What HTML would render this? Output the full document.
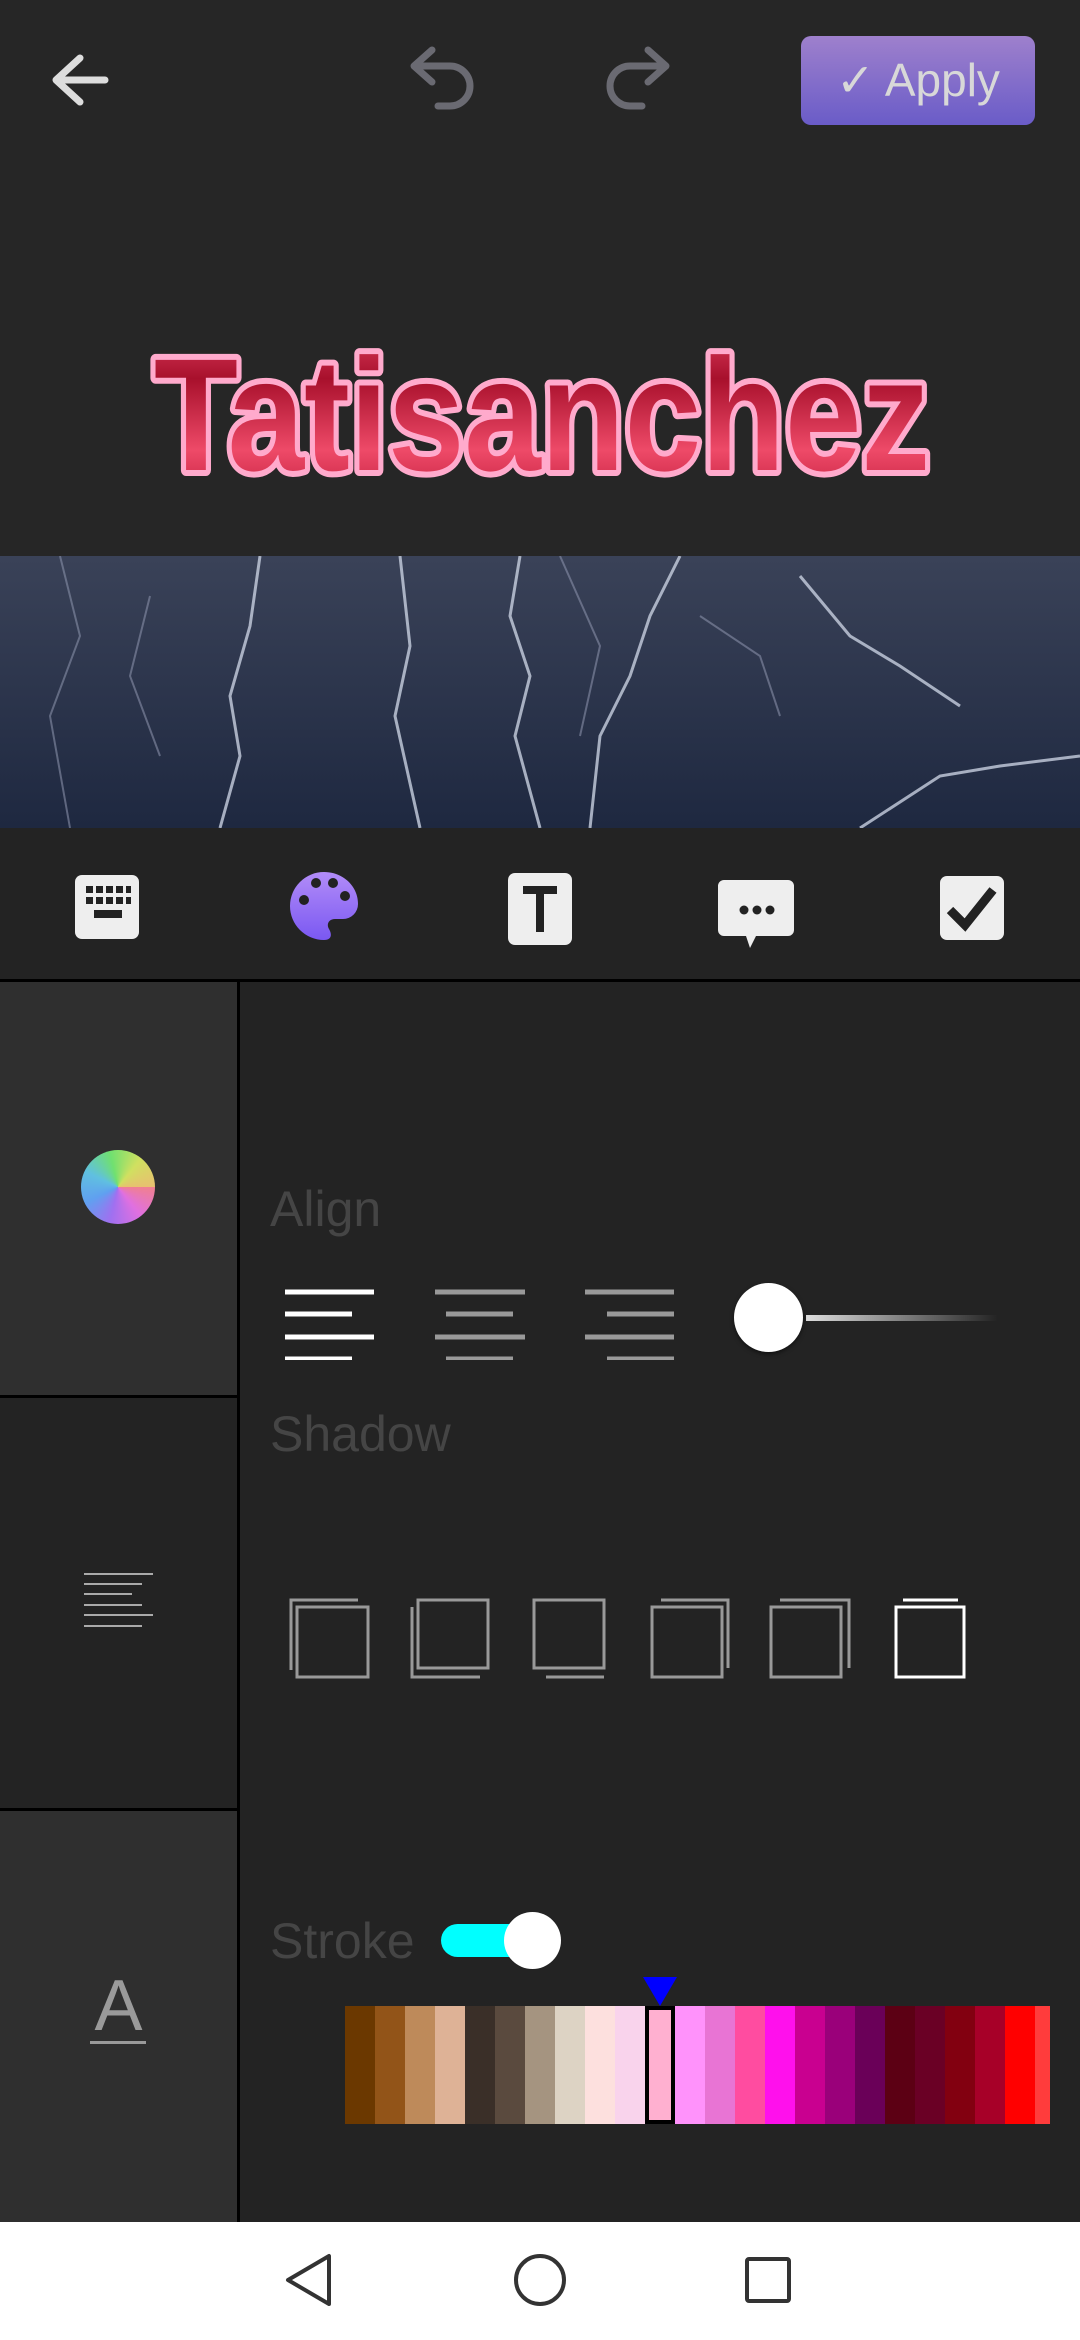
<!DOCTYPE html>
<html><head><meta charset="utf-8"><style>
*{margin:0;padding:0;box-sizing:border-box}
body{width:1080px;height:2340px;background:#262626;position:relative;overflow:hidden;font-family:"Liberation Sans",sans-serif}
.abs{position:absolute}
.lbl{position:absolute;color:#454545;font-size:50px;font-family:"Liberation Sans",sans-serif}
</style></head><body>
<!-- top bar -->
<svg class="abs" style="left:0;top:0" width="1080" height="140">
<path d="M105 80 H58 M80 58 L56 80 L80 102" stroke="#ddd" stroke-width="7" fill="none" stroke-linecap="round" stroke-linejoin="round"/>
<path d="M432 58 L414 74 L432 90 M416 74 H450 a20 20 0 0 1 0 40 H438" stroke="#6a6a72" stroke-width="7" fill="none" stroke-linecap="round" stroke-linejoin="round" transform="translate(0,-8)"/>
<path d="M648 58 L666 74 L648 90 M664 74 H630 a20 20 0 0 0 0 40 H642" stroke="#6a6a72" stroke-width="7" fill="none" stroke-linecap="round" stroke-linejoin="round" transform="translate(0,-8)"/>
</svg>
<div class="abs" style="left:801px;top:36px;width:234px;height:89px;border-radius:10px;background:linear-gradient(#9e80cc,#6a5cc8);color:#d8d8d8;font-size:46px;line-height:89px;text-align:center">✓ Apply</div>
<!-- title text -->
<svg class="abs" style="left:0;top:320px" width="1080" height="200">
<defs><linearGradient id="g" x1="0" y1="0" x2="0" y2="1"><stop offset="0" stop-color="#e04060"/><stop offset=".3" stop-color="#a8102c"/><stop offset=".7" stop-color="#ee4a68"/><stop offset="1" stop-color="#c01c3c"/></linearGradient></defs>
<text x="154" y="150" font-family="Liberation Sans" font-weight="bold" font-size="160" textLength="776" lengthAdjust="spacingAndGlyphs" fill="url(#g)" stroke="#ffaacc" stroke-width="12" stroke-linejoin="round" paint-order="stroke">Tatisanchez</text>
</svg>
<!-- lightning band -->
<svg class="abs" style="left:0;top:556px" width="1080" height="272">
<defs><linearGradient id="sky" x1="0" y1="0" x2="0" y2="1"><stop offset="0" stop-color="#3a4258"/><stop offset="1" stop-color="#1e2840"/></linearGradient></defs>
<rect width="1080" height="272" fill="url(#sky)"/>
<g stroke="#c8d0e0" stroke-width="3" fill="none" opacity=".8">
<path d="M520 0 L510 60 L530 120 L515 180 L540 272"/>
<path d="M680 0 L650 60 L630 120 L600 180 L590 272"/>
<path d="M260 0 L250 70 L230 140 L240 200 L220 272"/>
<path d="M800 20 L850 80 L900 110 L960 150"/>
<path d="M860 272 L940 220 L1000 210 L1080 200"/>
<path d="M400 0 L410 90 L395 160 L420 272"/>
</g>
<g stroke="#8890a8" stroke-width="2" fill="none" opacity=".6">
<path d="M60 0 L80 80 L50 160 L70 272"/><path d="M150 40 L130 120 L160 200"/><path d="M700 60 L760 100 L780 160"/><path d="M560 0 L600 90 L580 180"/>
</g>
</svg>
<!-- toolbar -->
<div class="abs" style="left:0;top:828px;width:1080px;height:152px;background:#232323"></div>
<svg class="abs" style="left:0;top:828px" width="1080" height="152">
<rect x="75" y="47" width="64" height="64" rx="7" fill="#eee"/>
<g fill="#222"><rect x="86" y="58" width="7" height="7"/><rect x="96" y="58" width="7" height="7"/><rect x="106" y="58" width="7" height="7"/><rect x="116" y="58" width="7" height="7"/><rect x="126" y="58" width="5" height="7"/><rect x="86" y="69" width="7" height="7"/><rect x="96" y="69" width="7" height="7"/><rect x="106" y="69" width="7" height="7"/><rect x="116" y="69" width="7" height="7"/><rect x="126" y="69" width="5" height="7"/><rect x="94" y="82" width="28" height="8"/></g>
<defs><linearGradient id="pal" x1="0" y1="0" x2="0" y2="1"><stop offset="0" stop-color="#b28cf8"/><stop offset="1" stop-color="#7a58f2"/></linearGradient></defs>
<path d="M324 44 a34 34 0 0 0 0 68 c8 0 8 -6 5 -11 c-3 -5 0 -10 6 -10 h8 a15 15 0 0 0 15 -15 c0 -18 -15 -32 -34 -32z" fill="url(#pal)"/>
<g fill="#222"><circle cx="304" cy="72" r="5"/><circle cx="316" cy="55" r="5"/><circle cx="333" cy="55" r="5"/><circle cx="345" cy="68" r="5"/></g>
<rect x="508" y="45" width="64" height="72" rx="7" fill="#eee"/>
<path d="M523 62 H557 M540 62 V104" stroke="#222" stroke-width="8" fill="none"/>
<path d="M724 52 h64 a6 6 0 0 1 6 6 v44 a6 6 0 0 1 -6 6 h-32 l-6 12 l-4 -12 h-22 a6 6 0 0 1 -6 -6 v-44 a6 6 0 0 1 6 -6z" fill="#eee"/>
<g fill="#222"><circle cx="744" cy="82" r="4.5"/><circle cx="757" cy="82" r="4.5"/><circle cx="770" cy="82" r="4.5"/></g>
<rect x="940" y="48" width="64" height="64" rx="7" fill="#eee"/>
<path d="M950 82 L965 97 L993 62" stroke="#222" stroke-width="9" fill="none"/>
</svg>
<div class="abs" style="left:0;top:979px;width:1080px;height:3px;background:#000"></div>
<!-- left column -->
<div class="abs" style="left:0;top:982px;width:237px;height:413px;background:#2f2f2f"></div>
<div class="abs" style="left:0;top:1395px;width:237px;height:3px;background:#000"></div>
<div class="abs" style="left:0;top:1398px;width:237px;height:410px;background:#232323"></div>
<div class="abs" style="left:0;top:1808px;width:237px;height:3px;background:#000"></div>
<div class="abs" style="left:0;top:1811px;width:237px;height:411px;background:#2f2f2f"></div>
<div class="abs" style="left:237px;top:982px;width:3px;height:1240px;background:#000"></div>
<div class="abs" style="left:240px;top:982px;width:840px;height:1240px;background:#232323"></div>
<div class="abs" style="left:81px;top:1150px;width:74px;height:74px;border-radius:50%;background:conic-gradient(from 90deg,#f08090,#e070e0,#a070f0,#60a0f0,#60c0e0,#70e070,#d0e060,#e8c070 360deg)"></div>
<svg class="abs" style="left:0;top:1560px" width="237" height="80" stroke="#aaa" stroke-width="2">
<path d="M84 14 H153 M84 24 H142 M84 34 H132 M84 45 H142 M84 55 H153 M84 66 H142"/>
</svg>
<div class="abs" style="left:0;top:1966px;width:237px;text-align:center;color:#9a9a9a;font-size:72px;line-height:80px">A</div>
<div class="abs" style="left:90px;top:2041px;width:56px;height:3px;background:#9a9a9a"></div>
<!-- right content -->
<div class="lbl" style="left:270px;top:1180px">Align</div>
<svg class="abs" style="left:270px;top:1280px" width="740" height="80">
<g stroke="#fff" stroke-width="5"><path d="M15 12 H104 M15 34 H82 M15 57 H104 M15 79 H82"/></g>
<g stroke="#999" stroke-width="5"><path d="M165 12 H255 M176 34 H243 M165 57 H255 M176 79 H243 M315 12 H404 M337 34 H404 M315 57 H404 M337 79 H404"/></g>
</svg>
<div class="abs" style="left:806px;top:1315px;width:192px;height:6px;background:linear-gradient(90deg,#ddd,rgba(200,200,200,0))"></div>
<div class="abs" style="left:734px;top:1283px;width:69px;height:69px;border-radius:50%;background:#fff;box-shadow:0 2px 4px rgba(0,0,0,.5)"></div>
<div class="lbl" style="left:270px;top:1405px">Shadow</div>
<svg class="abs" style="left:0;top:0" width="1080" height="1700" fill="none" stroke-width="3">
<g stroke="#999">
<rect x="297" y="1607" width="71" height="70"/><path d="M291 1670 V1600 H358"/>
<rect x="418" y="1600" width="70" height="68"/><path d="M412 1607 V1677 H480"/>
<rect x="534" y="1600" width="70" height="68"/><path d="M546 1677 H604"/>
<rect x="652" y="1607" width="70" height="70"/><path d="M661 1600 H728 V1668"/>
<rect x="771" y="1607" width="70" height="70"/><path d="M780 1600 H849 V1668"/>
</g>
<rect x="896" y="1607" width="68" height="70" stroke="#fff"/><path d="M903 1600 H958" stroke="#fff"/>
</svg>
<div class="lbl" style="left:270px;top:1912px">Stroke</div>
<div class="abs" style="left:441px;top:1924px;width:92px;height:33px;border-radius:17px;background:#0ff"></div>
<div class="abs" style="left:504px;top:1912px;width:57px;height:57px;border-radius:50%;background:#fff"></div>
<svg class="abs" style="left:640px;top:1977px" width="40" height="30"><path d="M3 0 H37 L20 29Z" fill="#0000ff"/></svg>
<div class="abs" style="left:345px;top:2006px;height:118px;display:flex">
<div style="width:30px;background:#6b3800"></div><div style="width:30px;background:#925418"></div><div style="width:30px;background:#be8a5a"></div><div style="width:30px;background:#deb296"></div><div style="width:30px;background:#3a2f28"></div><div style="width:30px;background:#5a4a3e"></div><div style="width:30px;background:#a59480"></div><div style="width:30px;background:#ddd3c4"></div><div style="width:30px;background:#fde0de"></div><div style="width:30px;background:#f9d3ec"></div><div style="width:30px;background:#ffb0d0;border:4px solid #000"></div><div style="width:30px;background:#ff92fb"></div><div style="width:30px;background:#e874d4"></div><div style="width:30px;background:#ff4ca0"></div><div style="width:30px;background:#ff10ec"></div><div style="width:30px;background:#c90090"></div><div style="width:30px;background:#9a007a"></div><div style="width:30px;background:#6a0058"></div><div style="width:30px;background:#5c0014"></div><div style="width:30px;background:#6a0025"></div><div style="width:30px;background:#820010"></div><div style="width:30px;background:#a70028"></div><div style="width:30px;background:#ff0000"></div><div style="width:15px;background:#ff3c3c"></div>
</div>
<!-- nav bar -->
<div class="abs" style="left:0;top:2222px;width:1080px;height:118px;background:#fff"></div>
<svg class="abs" style="left:0;top:2222px" width="1080" height="118" fill="none" stroke="#333" stroke-width="4">
<path d="M329 34 V82 L288 58Z" stroke-linejoin="round"/>
<circle cx="540" cy="58" r="24"/>
<rect x="747" y="37" width="42" height="42" rx="2"/>
</svg>
</body></html>
